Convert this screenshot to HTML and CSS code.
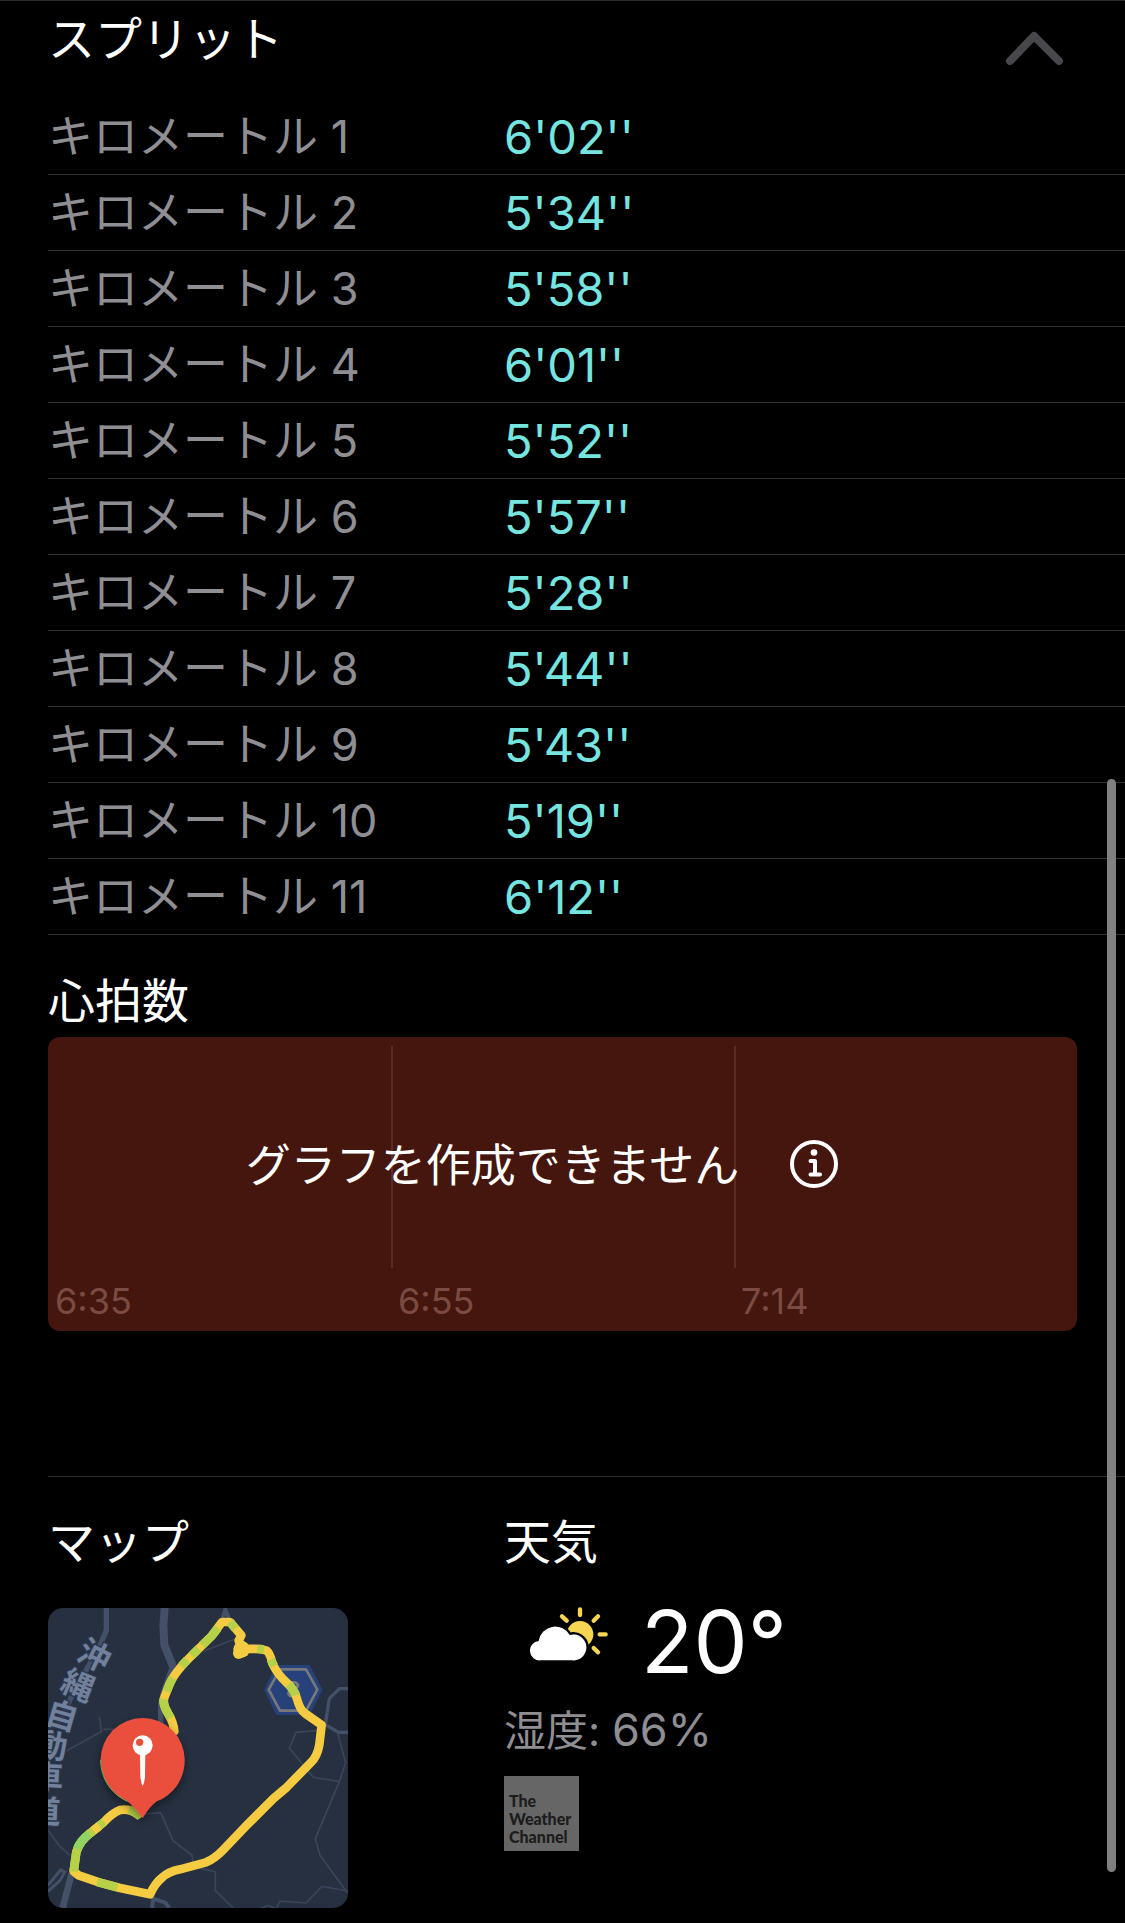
FILE: index.html
```html
<!DOCTYPE html>
<html lang="ja">
<head>
  <meta charset="UTF-8" />
  <meta name="viewport" content="width=device-width, initial-scale=1.0"/>
  <title>ワークアウト</title>
  <link rel="stylesheet" href="styles.css">
</head>
<body>
  <section class="splits">
    <div class="splits-header">
      <h2>スプリット</h2>
      <button class="toggle" type="button" aria-label="スプリットを閉じる">
        <svg width="60" height="40" viewBox="0 0 60 40" fill="none">
          <path d="M5 32 L29 7 L54 32" stroke="#48484c" stroke-width="8" stroke-linecap="round" stroke-linejoin="round"/>
        </svg>
      </button>
    </div>
    <table class="split-table">
      <tbody>
        <tr><th scope="row">キロメートル 1</th><td>6'02''</td></tr>
        <tr><th scope="row">キロメートル 2</th><td>5'34''</td></tr>
        <tr><th scope="row">キロメートル 3</th><td>5'58''</td></tr>
        <tr><th scope="row">キロメートル 4</th><td>6'01''</td></tr>
        <tr><th scope="row">キロメートル 5</th><td>5'52''</td></tr>
        <tr><th scope="row">キロメートル 6</th><td>5'57''</td></tr>
        <tr><th scope="row">キロメートル 7</th><td>5'28''</td></tr>
        <tr><th scope="row">キロメートル 8</th><td>5'44''</td></tr>
        <tr><th scope="row">キロメートル 9</th><td>5'43''</td></tr>
        <tr><th scope="row">キロメートル 10</th><td>5'19''</td></tr>
        <tr><th scope="row">キロメートル 11</th><td>6'12''</td></tr>
      </tbody>
    </table>
  </section>

  <section class="heart">
    <h2>心拍数</h2>
    <div class="chart">
      <div class="chart-column"><span>6:35</span></div>
      <div class="chart-column"><span>6:55</span></div>
      <div class="chart-column"><span>7:14</span></div>
      <div class="chart-message">
        <p>グラフを作成できません</p>
        <button class="info" type="button" aria-label="詳細情報">
          <svg width="50" height="50" viewBox="0 0 50 50" fill="none" stroke="#fff">
            <circle cx="25" cy="25" r="22" stroke-width="4"/>
            <circle cx="25" cy="13.5" r="3.3" fill="#fff" stroke="none"/>
            <path d="M21.5 22 H26 V35.5 M21.5 35.5 H31" stroke-width="4" stroke-linecap="round" stroke-linejoin="round"/>
          </svg>
        </button>
      </div>
    </div>
  </section>

  <section class="details">
    <div class="map-block">
      <h2>マップ</h2>
      <svg class="map" viewBox="24 54 900 900" role="img" aria-label="ランニングのルート">
        <defs>
          <filter id="shadow" x="-30%" y="-30%" width="160%" height="170%">
            <feDropShadow dx="0" dy="12" stdDeviation="14" flood-color="#000" flood-opacity="0.45"/>
          </filter>
        </defs>
        <rect x="24" y="54" width="900" height="900" fill="#263040"/>

        <!-- small roads -->
        <g fill="none" stroke="#3a455a" stroke-width="5">
          <path d="M490 184 L585 147"/>
          <path d="M178 380 L184 425 L80 482 M190 418 H240"/>
          <path d="M310 672 L362 668 L399 752 L456 796 L462 830 L526 846 V902 L580 954"/>
          <path d="M850 420 L768 427 L748 474 L820 562 L898 575 L917 518 L893 430"/>
          <path d="M898 575 L826 746 L840 796 L922 908"/>
          <path d="M650 960 L684 946 L708 956 L720 933 L798 939 L846 889 L924 903"/>
          <path d="M24 720 L58 768 L90 796"/>
        </g>
        <!-- main roads -->
        <g fill="none" stroke="#435068">
          <path d="M199 54 V122 L178 170 L100 310 L50 410" stroke-width="16"/>
          <path d="M374 54 L370 105 L373 165 L400 232" stroke-width="24"/>
          <path d="M400 225 L372 300 L362 340 V410" stroke-width="16"/>
          <path d="M548 84 L556 58 L566 84" stroke-width="12"/>
          <path d="M924 296 H898 L868 326 L856 404 L896 427 H924" stroke-width="10"/>
          <path d="M95 850 L68 954" stroke-width="20"/>
          <path d="M24 886 L62 840 L74 846 L60 872 L24 904" stroke-width="9"/>
          <path d="M336 954 L340 926 L376 938 L388 954" stroke-width="12"/>
        </g>

        <g class="road-name">
          <text transform="translate(163 197) rotate(27)" dy="34">沖</text>
          <text transform="translate(114 287) rotate(23)" dy="34">縄</text>
          <text transform="translate(66 378) rotate(16)" dy="34">自</text>
          <text transform="translate(34 467) rotate(8)" dy="34">動</text>
          <text transform="translate(22 562) rotate(3)" dy="34">車</text>
          <text transform="translate(14 665) rotate(2)" dy="34">道</text>
        </g>

        <!-- route number sign -->
        <path d="M712 230 H806 L842 299 L806 370 H712 L678 299 Z" fill="#27417a" stroke="#27417a" stroke-width="10" stroke-linejoin="round"/>
        <path d="M720 238 H798 L832 299 L798 362 H720 L686 299 Z" fill="none" stroke="#77787c" stroke-width="8" stroke-linejoin="round"/>
        <text class="sign-number" x="760" y="323">8</text>

        <!-- route -->
        <g fill="none" stroke-linecap="round" stroke-linejoin="round" stroke-width="26">
          <path stroke="#f5cb42" d="M294 674 Q270 655 240 660 Q215 670 192 696 L150 730 Q120 752 109 786 L101 844 L116 856 L180 878 L240 894 L330 913 Q345 880 365 864 Q385 845 420 838 L498 817 Q525 805 550 779 L620 706 L700 626 L740 592 L812 518 Q832 500 838 464 L845 405 L796 371 Q780 360 772 330 Q765 300 738 276 Q712 252 698 222 Q690 190 680 182 L660 177 L614 176 L596 190 L608 174 L596 152 L604 136 L570 96 H546 L515 138 L460 192 Q405 245 390 280 L374 320 Q366 340 384 370 Q400 395 403 424"/>
          <g stroke="#b6d048" stroke-linecap="butt">
            <path d="M302 680 Q288 668 268 658"/>
            <path d="M192 696 L150 730 Q120 752 109 786 L101 844"/>
            <path d="M172 876 L232 892"/>
            <path d="M534 114 L515 138 L486 166"/>
            <path d="M476 176 L455 197 M442 209 L424 228"/>
            <path d="M398 264 Q386 285 380 304"/>
            <path d="M371 327 Q367 342 384 370 L392 384"/>
            <path d="M570 96 L586 116"/>
            <path d="M652 177 L672 178"/>
            <path d="M692 208 L702 228"/>
            <path d="M746 283 Q762 300 766 316"/>
          </g>
          <path stroke="#8fd362" stroke-linecap="butt" d="M148 732 Q120 752 112 776"/>
          <path stroke="#f5cb42" stroke-linecap="butt" d="M178 708 L160 722"/>
        </g>
        <circle cx="605" cy="178" r="25" fill="#f5cb42"/>
        <circle cx="596" cy="190" r="17" fill="#f5cb42"/>

        <!-- pin -->
        <path filter="url(#shadow)" d="M308 684 Q284 650 262 634 C214 612 182 566 182 510 A126 126 0 0 1 434 510 C434 566 402 614 350 634 Q330 648 308 684 Z" fill="#ea4f3d"/>
        <path d="M182 510 C182 566 214 612 262 634" fill="none" stroke="#5fae55" stroke-width="3"/>
        <circle cx="308" cy="466" r="30" fill="#fff"/>
        <circle cx="299" cy="457" r="11" fill="#ea4f3d"/>
        <path d="M300 492 H316 L315 560 Q313 580 308 588 Q303 580 301 560 Z" fill="#fff"/>
      </svg>
    </div>

    <div class="weather-block">
      <h2>天気</h2>
      <div class="weather-now">
        <svg class="weather-icon" viewBox="150 318 240 166" aria-hidden="true">
          <circle cx="300" cy="402" r="40" fill="#f7d552"/>
          <g stroke="#f7d552" stroke-width="13" stroke-linecap="round">
            <path d="M300 327 V344 M246 348 L260 361 M354 348 L341 361 M359 402 H377 M341 443 L354 456"/>
          </g>
          <path d="M182 480 A29 29 0 0 1 176 422 A50 50 0 0 1 269 404 A39 39 0 1 1 275 480 Z" fill="#fff" stroke="#000" stroke-width="14" paint-order="stroke"/>
        </svg>
        <span class="temperature">20°</span>
      </div>
      <p class="humidity">湿度: <span>66%</span></p>
      <a class="weather-logo" href="#">The<br>Weather<br>Channel</a>
    </div>
  </section>

  <div class="scroll-thumb"></div>
</body>
</html>
```

FILE: styles.css
```css
* {
  box-sizing: border-box;
}

body {
  margin: 0;
  background-color: #000;
  color: #fff;
  font-family: Inter, "Noto Sans CJK JP", sans-serif;
  font-size: 45px;
  font-weight: 400;
}

h2, p {
  margin: 0;
}

h2 {
  font-size: 47px;
  font-weight: 400;
  line-height: 60px;
}

button {
  display: flex;
  padding: 0;
  border: none;
  background: none;
  cursor: pointer;
}

/* Splits */
.splits {
  border-top: 1px solid #2c2c2e;
}

.splits-header {
  display: flex;
  justify-content: space-between;
  align-items: flex-start;
  height: 98px;
  padding: 8px 60px 0 48px;
}

.toggle {
  padding-top: 20px;
}

.split-table {
  width: calc(100% - 48px);
  margin-left: 48px;
  border-collapse: separate;
  border-spacing: 0;
}

.split-table th,
.split-table td {
  height: 76px;
  padding: 0;
  border-bottom: 1px solid #2f2f32;
  line-height: 60px;
  text-align: left;
}

.split-table th {
  width: 456px;
  color: #8e8e93;
  font-size: 45px;
  font-weight: 400;
}

.split-table td {
  color: #76e5e0;
  font-size: 47px;
}

/* Heart rate */
.heart {
  padding: 36px 48px 145px;
}

.chart {
  position: relative;
  display: grid;
  grid-template-columns: repeat(3, 1fr);
  height: 294px;
  margin-top: 6px;
  padding: 9px 0;
  border-radius: 12px;
  background-color: #44160d;
}

.chart-column {
  display: grid;
  grid-template-rows: 222px 1fr;
  color: #7b4b43;
  font-size: 36px;
}

.chart-column::before {
  content: "";
}

.chart-column + .chart-column::before {
  border-left: 2px solid #5a2c24;
}

.chart-column span {
  padding: 10px 0 0 7px;
  line-height: 46px;
}

.chart-message {
  position: absolute;
  inset: 0;
  display: flex;
  align-items: center;
  justify-content: center;
  gap: 50px;
  padding: 0 40px 40px 0;
  font-size: 45px;
}

.chart-message p {
  padding-bottom: 4px;
}

/* Map and weather */
.details {
  display: grid;
  grid-template-columns: 456px 1fr;
  margin-left: 48px;
  padding: 35px 0 14px;
  border-top: 1px solid #2c2c2e;
}

.map {
  display: block;
  width: 300px;
  height: 300px;
  margin-top: 36px;
  border-radius: 15px;
}

.road-name {
  fill: #71809b;
  stroke: #2a364b;
  stroke-width: 8px;
  paint-order: stroke;
  font-size: 96px;
  font-weight: 700;
  text-anchor: middle;
}

.sign-number {
  fill: #77787c;
  font-size: 68px;
  font-weight: 700;
  text-anchor: middle;
}

.weather-now {
  display: flex;
  align-items: center;
  gap: 31px;
  height: 100px;
  margin-top: 20px;
  padding-left: 26px;
}

.weather-icon {
  width: 80px;
  height: 56px;
  margin-bottom: 16px;
}

.temperature {
  font-size: 86px;
}

.humidity {
  margin-top: 8px;
  color: #8e8e93;
  font-size: 42px;
  line-height: 60px;
}

.humidity span {
  font-size: 45px;
}

.weather-logo {
  display: block;
  width: 75px;
  height: 75px;
  margin-top: 15px;
  padding: 16px 0 0 5px;
  background-color: #666;
  color: #1c1c1c;
  font-family: Lato, sans-serif;
  font-size: 16px;
  font-weight: 900;
  line-height: 18px;
  text-decoration: none;
}

.scroll-thumb {
  position: absolute;
  top: 779px;
  right: 9px;
  width: 9px;
  height: 1093px;
  border-radius: 5px;
  background-color: #808080;
}
```
